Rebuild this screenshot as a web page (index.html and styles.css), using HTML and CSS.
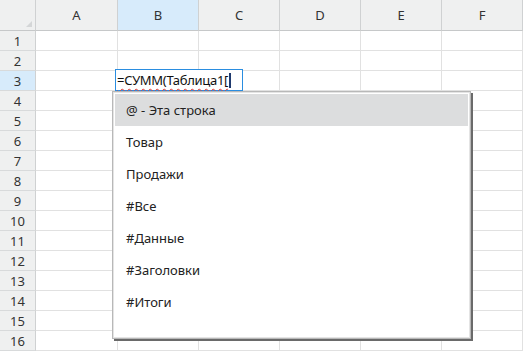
FILE: index.html
```html
<!DOCTYPE html>
<html lang="ru">
<head>
    <meta charset="UTF-8">
    <title>Таблица</title>
    <link rel="stylesheet" href="styles.css">
</head>
<body>
    <div class="sheet">
        <div class="grid">
            <div class="corner"></div>
            <div class="col-head">A</div>
            <div class="col-head active">B</div>
            <div class="col-head">C</div>
            <div class="col-head">D</div>
            <div class="col-head">E</div>
            <div class="col-head">F</div>
        </div>
        <div class="grid" id="rows"></div>

        <div class="editor">
            <span class="formula">=СУММ(Таблица1[</span><span class="caret"></span>
        </div>

        <ul class="dropdown">
            <li class="selected">@ - Эта строка</li>
            <li>Товар</li>
            <li>Продажи</li>
            <li>#Все</li>
            <li>#Данные</li>
            <li>#Заголовки</li>
            <li>#Итоги</li>
        </ul>
    </div>

    <script>
        const rows = document.getElementById('rows');
        for (let r = 1; r <= 16; r++) {
            const head = document.createElement('div');
            head.className = 'row-head' + (r === 3 ? ' active' : '');
            head.textContent = r;
            rows.appendChild(head);
            for (let c = 0; c < 6; c++) {
                const cell = document.createElement('div');
                cell.className = 'cell';
                rows.appendChild(cell);
            }
        }
    </script>
</body>
</html>
```

FILE: styles.css
```css
body {
    margin: 0;
    font-family: "Noto Sans", "Liberation Sans", sans-serif;
    background-color: #fff;
    color: #222;
    overflow: hidden;
}
.sheet {
    position: relative;
    width: 523px;
    height: 352px;
}
.grid {
    display: grid;
    grid-template-columns: 36px 82px repeat(5, 81px);
}
.corner, .col-head {
    height: 31px;
    box-sizing: border-box;
    background-color: #eff0f0;
    border-right: 1px solid #cfd1d2;
    border-bottom: 1px solid #c6c8c9;
}
.corner {
    position: relative;
}
.corner::after {
    content: "";
    position: absolute;
    right: 3px;
    bottom: 3px;
    border-left: 6px solid transparent;
    border-bottom: 6px solid #d4d6d7;
}
.col-head {
    display: flex;
    align-items: center;
    justify-content: center;
    font-size: 13px;
    color: #333;
}
.row-head {
    height: 20px;
    box-sizing: border-box;
    background-color: #eff0f0;
    border-right: 1px solid #cfd1d2;
    border-bottom: 1px solid #d8dadb;
    display: flex;
    align-items: center;
    justify-content: center;
    font-size: 13px;
    color: #333;
}
.col-head.active, .row-head.active {
    background-color: #d7ebfb;
}
.cell {
    height: 20px;
    box-sizing: border-box;
    border-right: 1px solid #e1e1e1;
    border-bottom: 1px solid #e1e1e1;
}
.editor {
    position: absolute;
    left: 115px;
    top: 69px;
    width: 128px;
    height: 22px;
    box-sizing: border-box;
    border: 1px solid #2a8de0;
    background-color: #fff;
    padding-left: 1px;
    display: flex;
    align-items: center;
    font-size: 13px;
    color: #111;
}
.formula {
    letter-spacing: -0.3px;
    text-decoration: underline wavy #e0403a;
    text-decoration-thickness: 1px;
    text-underline-offset: 3px;
}
.caret {
    width: 2px;
    height: 15px;
    margin-left: 1px;
    background-color: #1f3a6e;
}
.dropdown {
    position: absolute;
    left: 112px;
    top: 91px;
    width: 359px;
    height: 248px;
    box-sizing: border-box;
    margin: 0;
    padding: 2px;
    list-style: none;
    background-color: #fff;
    border: 1px solid #b8b8b8;
    box-shadow: inset 0 0 0 1px #e4e4e4, 2px 2px 0 #6a6a6a;
}
.dropdown li {
    height: 32px;
    display: flex;
    align-items: center;
    padding-left: 11px;
    font-size: 13px;
    color: #222;
}
.dropdown li.selected {
    background-color: #dcddde;
}
```
